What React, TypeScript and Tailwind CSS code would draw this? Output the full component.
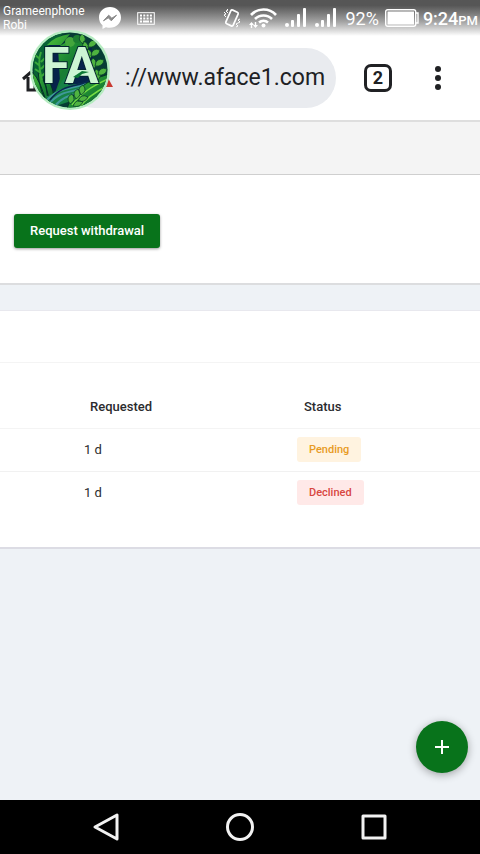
import React from "react";

function Signal() {
  return (
    <svg width="24" height="20" viewBox="0 0 24 20" fill="currentColor" aria-hidden="true">
      <circle cx="3" cy="17" r="2" />
      <rect x="7" y="12" width="3" height="7" rx="1" />
      <rect x="13" y="6" width="3" height="13" rx="1" />
      <rect x="19" y="0" width="3" height="19" rx="1" />
    </svg>
  );
}

function StatusBar() {
  return (
    <header className="flex h-9 bg-linear-to-b from-[#565656] from-15% via-[#a3a3a3] via-60% to-white text-white">
      <div className="w-24 pt-1 pl-[3px] text-[12px] leading-[14px]">
        <div>Grameenphone</div>
        <div>Robi</div>
      </div>
      <svg className="mt-[7px] ml-[3px] h-[22px] w-[22px]" viewBox="0 0 22 22" aria-hidden="true">
        <path d="M11 0C4.700 0 0 4.500 0 10.500c0 3.200 1.300 6 3.500 7.800V22l3.400-1.800c1.300.4 2.700.6 4.100.6 6.300 0 11-4.400 11-10.300S17.300 0 11 0z" fill="#fff" />
        <path d="M4.500 13.800l5.200-5.600 3.100 3 4.700-3-5.200 5.600-3-3z" fill="#8a8a8a" stroke="#8a8a8a" />
      </svg>
      <svg className="mt-[12px] ml-4 h-[13px] w-[18px]" viewBox="0 0 18 13" fill="none" stroke="#fff" aria-hidden="true">
        <rect x=".7" y=".7" width="16.600" height="11.600" />
        <path d="M3 3.500h12M3 6.500h12" strokeWidth="2" strokeDasharray="2 1.300" />
        <path d="M3 9.500h2M6 9.500h6M13 9.500h2" strokeWidth="1.800" />
      </svg>
      <div className="ml-auto flex h-9 items-center pr-[2px]">
        <svg className="h-5 w-[18px]" viewBox="0 0 18 20" fill="none" stroke="#fff" aria-hidden="true">
          <rect x="5" y="2.500" width="8" height="15" rx="1.500" transform="rotate(24 9 10)" strokeWidth="1.700" />
          <path d="M1 4l2 2-2 1 2 2M4 1l1 1-2 1 2 2M17 11l-2 1 2 2-2 1M15 15l-2 1 2 2-2 1" />
        </svg>
        <svg className="ml-2 h-5 w-[29px]" viewBox="0 0 29 20" fill="none" stroke="#fff" strokeWidth="2.600" aria-hidden="true">
          <path d="M2 7a17 17 0 0 1 25 0M6 11a12 12 0 0 1 17 0M10 14.500a7 7 0 0 1 9 0" />
          <circle cx="14.500" cy="17.500" r="2" fill="#fff" stroke="none" />
          <path d="M2.500 20v-5M6.500 14v5" strokeWidth="1.400" />
          <path d="M0 17l2.500-3L5 17zM4 17l2.500 3L9 17z" fill="#fff" stroke="none" />
        </svg>
        <span className="ml-[6px] flex gap-[6px]">
          <Signal />
          <Signal />
        </span>
        <span className="ml-[7px] text-[18px]">92%</span>
        <svg className="ml-[6px] h-[18px] w-[34px]" viewBox="0 0 34 18" fill="none" stroke="#fff" aria-hidden="true">
          <rect x=".7" y=".7" width="30" height="16.600" rx="2" strokeWidth="1.400" />
          <rect x="2.500" y="2.500" width="26.500" height="13" fill="#fff" stroke="none" />
          <path d="M31 4h2v10h-2" strokeWidth="1.400" />
        </svg>
        <span className="ml-1 text-[18px] font-medium">
          9:24<span className="text-[13px]">PM</span>
        </span>
      </div>
    </header>
  );
}

function Logo() {
  return (
    <svg className="absolute top-[30px] left-[30px] h-20 w-20" viewBox="0 0 80 80" role="img" aria-label="FA">
      <defs>
        <clipPath id="disc">
          <circle cx="40" cy="40" r="37.500" />
        </clipPath>
        <linearGradient id="leaf" x1="0" y1="0" x2="1" y2="1">
          <stop offset="0" stopColor="#4fc23a" />
          <stop offset=".5" stopColor="#1e8a33" />
          <stop offset="1" stopColor="#07542f" />
        </linearGradient>
      </defs>
      <circle cx="40" cy="40" r="40" fill="#b5ecc0" />
      <circle cx="40" cy="40" r="37.500" fill="#073c35" />
      <g clipPath="url(#disc)">
        <path d="M16 14h45l5 38-25 15-25-9z" fill="#06234a" />
        <path d="M3 22C10 10 22 4 34 3L17 17l-5 35-8-5z" fill="#086334" />
        <path d="M17 15Q25 6 40 4L31 15zM28 17L48 5l6 10-16 29-8 8z" fill="url(#leaf)" />
        <path d="M32 43L50 17l-9 27-16 19z" fill="#187e36" />
        <circle cx="40" cy="12" r="5" fill="#43a63c" />
        <circle cx="47" cy="9" r="4" fill="#1c7d31" />
        <path d="M2 42q9 8 15 34Q4 67 2 42zM8 40q10 16 12 36Q9 64 8 40zM14 44q8 8 10 23l-5 9z" fill="url(#leaf)" stroke="#032f29" />
        <path d="M16 66C31 65 27 48 43 42l-5 13 26-3-17 17-27 9z" fill="#168247" />
        <path d="M15 72c15-17 28-12 41-19M18 75c14-17 27-12 42-19M23 78c13-16 24-12 39-20" fill="none" stroke="#40999a" strokeWidth="2" />
        <path d="M20 70c13-17 27-12 41-20" fill="none" stroke="#082951" strokeWidth="1.500" />
        <path d="M37 79c5-17 18-29 43-35-3 22-19 35-43 35z" fill="url(#leaf)" stroke="#053326" />
        <path d="M42 75C52 62 63 56 78 49M48 79c8-11 17-17 29-23" fill="none" stroke="#76db43" strokeWidth="1.500" />
        <g fill="#4fb340" stroke="#07412c" strokeWidth=".8">
          <path d="M53 14q-7-5-1-10 6 4 1 10zM57 21q-7-5-3-10 7 4 3 10zM60 29q-7-5-2-10 7 4 2 10zM64 39q-7-5-1-11 6 4 1 11zM68 50q-7-5-2-11 8 4 2 11z" />
          <path d="M58 17q1-9 9-6-1 7-9 6zM61 26q1-9 9-6-1 7-9 6zM65 36q1-9 9-6-1 7-9 6zM68 45q1-9 9-6-1 7-9 6z" />
          <path d="M40 74q-5-7 2-10 5 6-2 10zM46 69q-5-7 2-10 5 6-2 10zM51 65q-5-7 2-10 5 6-2 10zM43 76q3-8 10-4-3 6-10 4zM48 71q3-8 10-4-3 6-10 4z" />
        </g>
        <path d="M12 50Q7 32 11 22M10 29l-5-4M10 36l-5-4M11 43l-6-4M11 32l4-4M11 39l4-4M12 46l4-4" fill="none" stroke="#38a83b" strokeWidth="2" />
      </g>
      <text
        x="12"
        y="53"
        fontFamily="Roboto, sans-serif"
        fontSize="50"
        fontWeight="700"
        fill="#ccf5d3"
        stroke="#032430"
        strokeWidth="2"
        paintOrder="stroke"
      >
        FA
      </text>
      <path d="M43 47l9-6 7 1-7 2-4 4z" fill="#0c7835" />
    </svg>
  );
}

function Toolbar() {
  return (
    <div className="flex h-[86px] items-center border-b-2 border-[#dedede] bg-white pl-[22px] text-[#202124]">
      <button aria-label="Home" className="w-[43px]">
        <svg width="32" height="28" viewBox="0 0 32 28" fill="none" stroke="currentColor" strokeWidth="3" aria-hidden="true">
          <path d="M6 13v13h7v-8h6v8h7V13M1 15L16 2l15 13" />
        </svg>
      </button>
      <div className="flex h-[60px] w-[271px] items-center rounded-full bg-[#e9ebef] pr-2 pl-7">
        <svg width="20" height="18" viewBox="0 0 20 18" fill="#c93a31" aria-hidden="true">
          <path d="M10 0l10 18H0z" />
        </svg>
        <input
          aria-label="Address"
          className="ml-3 w-0 flex-1 bg-transparent text-[23px] outline-none"
          defaultValue="://www.aface1.com"
        />
      </div>
      <button aria-label="Switch tabs" className="ml-7 flex h-7 w-7 items-center justify-center rounded-[7px] border-3 border-current text-[18px] leading-none font-bold">
        2
      </button>
      <button aria-label="More options" className="ml-[30px] flex h-10 w-8 items-center justify-center">
        <svg width="6" height="24" viewBox="0 0 6 24" fill="currentColor" aria-hidden="true">
          <circle cx="3" cy="3" r="3" />
          <circle cx="3" cy="12" r="3" />
          <circle cx="3" cy="21" r="3" />
        </svg>
      </button>
    </div>
  );
}

const requests = [
  { requested: "1 d", status: "Pending", tone: "bg-[#fff3e0] text-[#e89b24]" },
  { requested: "1 d", status: "Declined", tone: "bg-[#ffe9e8] text-[#d84640]" },
];

export default function App() {
  return (
    <div className="relative flex min-h-screen flex-col bg-[#eef2f6] font-[Roboto,sans-serif] text-[#2b2b2e]">
      <StatusBar />
      <Toolbar />
      <Logo />
      <main className="flex flex-1 flex-col">
        <div className="h-[53px] border-b border-[#cfcfcf] bg-[#f4f4f4]" />
        <section className="border-b-2 border-[#dcdddf] bg-white pt-[39px] pb-[35px] pl-[14px]">
          <button className="block h-[34px] rounded-[3px] bg-[#08731b] px-4 text-[13px] font-medium text-white shadow-[0_1px_3px_#0006]">
            Request withdrawal
          </button>
        </section>
        <section className="mt-[25px] border-t border-b-2 border-t-[#e8e8ee] border-b-[#dcdce4] bg-white pb-[33px]">
          <div className="h-[52px] border-b border-[#f4f4f4]" />
          <table className="w-full table-fixed border-collapse text-left text-[13px]">
            <thead>
              <tr className="h-[65px] border-b border-[#f4f4f4]">
                <th className="w-3/5 pt-[22px] pl-[90px] font-medium">Requested</th>
                <th className="pt-[22px] pl-4 font-medium">Status</th>
              </tr>
            </thead>
            <tbody>
              {requests.map((request) => (
                <tr key={request.status} className="h-[43px] border-b border-[#f1f1f1] last:border-0">
                  <td className="pl-[84px]">{request.requested}</td>
                  <td className="pl-[9px]">
                    <span className={`inline-block rounded-[3px] px-3 text-[11px] leading-[25px] font-medium ${request.tone}`}>
                      {request.status}
                    </span>
                  </td>
                </tr>
              ))}
            </tbody>
          </table>
        </section>
        <button
          aria-label="Add"
          className="mt-auto mr-3 mb-[27px] flex h-[52px] w-[52px] items-center justify-center self-end rounded-full bg-[#08731b] text-white shadow-[0_2px_8px_#0005]"
        >
          <svg width="14" height="14" viewBox="0 0 14 14" stroke="currentColor" strokeWidth="2" aria-hidden="true">
            <path d="M7 0v14M0 7h14" />
          </svg>
        </button>
      </main>
      <nav aria-label="System" className="flex h-[54px] items-center justify-center gap-[106px] bg-black text-[#f2f2f2]">
        <button aria-label="Back">
          <svg width="28" height="30" viewBox="0 0 28 30" fill="none" stroke="currentColor" strokeWidth="3" strokeLinejoin="round" aria-hidden="true">
            <path d="M25 3v24L3 15z" />
          </svg>
        </button>
        <button aria-label="Home screen">
          <svg width="28" height="28" viewBox="0 0 28 28" fill="none" stroke="currentColor" strokeWidth="3" aria-hidden="true">
            <circle cx="14" cy="14" r="12.500" />
          </svg>
        </button>
        <button aria-label="Recent apps">
          <svg width="28" height="28" viewBox="0 0 28 28" fill="none" stroke="currentColor" strokeWidth="3" strokeLinejoin="round" aria-hidden="true">
            <rect x="3" y="3" width="22" height="22" />
          </svg>
        </button>
      </nav>
    </div>
  );
}
